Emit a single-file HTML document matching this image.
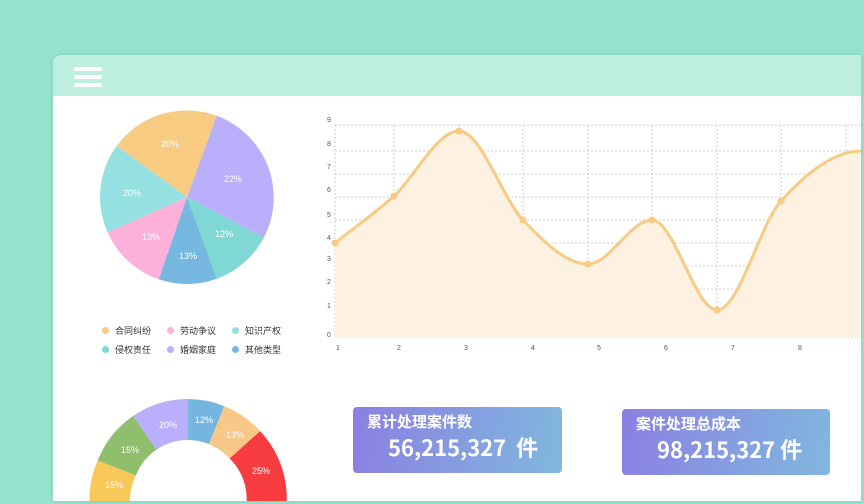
<!DOCTYPE html>
<html><head><meta charset="utf-8"><style>
body{margin:0;width:864px;height:504px;background:#95e3ce;overflow:hidden;position:relative;font-family:"Liberation Sans","Noto Sans CJK SC",sans-serif}
.card{position:absolute;left:53px;top:55px;width:808px;height:446px;background:#fff;border-radius:8px 0 0 0;overflow:hidden;box-shadow:0 0 4px rgba(0,0,0,.12)}
.hdr{position:absolute;left:0;top:0;width:100%;height:41px;background:#bdeee0}
.bar{position:absolute;left:21px;width:28px;height:4px;border-radius:2px;background:#fff}
.stat{position:absolute;height:66px;border-radius:4px;background:linear-gradient(100deg,#8b7fe2,#80b8de);color:#fff;font-family:"Noto Sans CJK SC",sans-serif;font-weight:bold}
.stat .t{position:absolute;left:14px;top:4px;font-size:15px}
.stat .n{position:absolute;left:35px;top:24px;font-size:22px}
.lg{position:absolute;font-size:9px;color:#333;font-family:"Noto Sans CJK SC",sans-serif}
.lg i{display:inline-block;width:7px;height:7px;border-radius:50%;margin-right:6px;vertical-align:-0px}
</style></head><body>
<div class="card">
<div class="hdr"><div class="bar" style="top:12px"></div><div class="bar" style="top:20px"></div><div class="bar" style="top:28px"></div></div>
</div>
<svg width="864" height="504" style="position:absolute;left:0;top:0" font-family="Liberation Sans,sans-serif">
<defs><clipPath id="c"><rect x="53" y="96" width="808" height="405"/></clipPath></defs>
<g clip-path="url(#c)">
<!-- pie -->
<g transform="translate(187,197)">
<path d="M0 0L29.7 -81.2A87 87 0 0 1 76.8 40.8Z" fill="#b9affa"/>
<path d="M0 0L76.8 40.8A87 87 0 0 1 29.8 81.7Z" fill="#80d8d4"/>
<path d="M0 0L29.8 81.7A87 87 0 0 1 -28.3 82.3Z" fill="#76b8e0"/>
<path d="M0 0L-28.3 82.3A87 87 0 0 1 -79.4 35.4Z" fill="#fdb0da"/>
<path d="M0 0L-79.4 35.4A87 87 0 0 1 -70.4 -51.1Z" fill="#95e0e0"/>
<path d="M0 0L-70.4 -51.1A87 87 0 0 1 29.7 -81.2Z" fill="#f8cb83"/>
<g fill="#fff" font-size="9" text-anchor="middle">
<text x="-17" y="-50">20%</text><text x="46" y="-15">22%</text><text x="-55" y="-1">20%</text>
<text x="-36" y="43">13%</text><text x="37" y="40">12%</text><text x="1" y="62">13%</text></g>
</g>
<!-- donut -->
<g transform="translate(188,496)">
<path d="M0 -97A97 97 0 0 1 36.3 -89.9L21 -51.9A56 56 0 0 0 0 -56Z" fill="#75b6e0"/>
<path d="M36.3 -89.9A97 97 0 0 1 72.1 -64.9L41.6 -37.5A56 56 0 0 0 21 -51.9Z" fill="#f7c887"/>
<path d="M72.1 -64.9A97 97 0 0 1 97 20L56 20A56 56 0 0 0 41.6 -37.5Z" fill="#f73d40"/>
<path d="M0 -97L0 -56A56 56 0 0 0 -31.7 -46.2L-54.9 -80A97 97 0 0 1 0 -97Z" fill="#b9affa"/>
<path d="M-54.9 -80L-31.7 -46.2A56 56 0 0 0 -52.1 -20.5L-90.3 -35.5A97 97 0 0 1 -54.9 -80Z" fill="#8fbf6c"/>
<path d="M-90.3 -35.5L-52.1 -20.5A56 56 0 0 0 -56 20L-97 20A97 97 0 0 1 -90.3 -35.5Z" fill="#f9c85a"/>
<g fill="#fff" font-size="9" text-anchor="middle">
<text x="16" y="-73">12%</text><text x="47" y="-58">13%</text><text x="73" y="-22">25%</text>
<text x="-20" y="-68">20%</text><text x="-58" y="-43">15%</text><text x="-74" y="-8">15%</text></g>
</g>
<!-- line chart grid -->
<g stroke="#ccc" stroke-width="1" stroke-dasharray="2,2" fill="none">
<path d="M335 125H864M335 151H864M335 174H864M335 197H864M335 220H864M335 243H864M335 266H864M335 289H864M335 311H864M335 337H864"/>
<path d="M335 125V337M394 125V337M459 125V337M523 125V337M588 125V337M652 125V337M717 125V337M781 125V337M846 125V337"/>
</g>
<path d="M335 243C355 227 374 214 394 196C414 178 437 131 459 131C481 131 502 198 523 220C544 242 566 264 588 264C610 264 630 220 652 220C674 220 695 310 717 310C739 310 760 224 781 201C808 171 835 151 861 151L861 337L335 337Z" fill="#fdf1e1"/>
<path d="M335 243C355 227 374 214 394 196C414 178 437 131 459 131C481 131 502 198 523 220C544 242 566 264 588 264C610 264 630 220 652 220C674 220 695 310 717 310C739 310 760 224 781 201C808 171 835 151 861 151" fill="none" stroke="#f7cb83" stroke-width="3"/>
<g fill="#f7cb83"><circle cx="335" cy="243" r="3.5"/><circle cx="394" cy="196" r="3.5"/><circle cx="459" cy="131" r="3.5"/><circle cx="523" cy="220" r="3.5"/><circle cx="588" cy="264" r="3.5"/><circle cx="652" cy="220" r="3.5"/><circle cx="717" cy="310" r="3.5"/><circle cx="781" cy="201" r="3.5"/></g>
<g fill="#555" font-size="7">
<text x="327" y="122">9</text><text x="327" y="146">8</text><text x="327" y="169">7</text><text x="327" y="192">6</text><text x="327" y="217">5</text><text x="327" y="240">4</text><text x="327" y="261">3</text><text x="327" y="284">2</text><text x="327" y="308">1</text><text x="327" y="337">0</text>
<text x="336" y="350">1</text><text x="397" y="350">2</text><text x="464" y="350">3</text><text x="531" y="350">4</text><text x="597" y="350">5</text><text x="664" y="350">6</text><text x="731" y="350">7</text><text x="798" y="350">8</text>
</g>
</g>
</svg>
<div class="lg" style="left:102px;top:324px"><i style="background:#f8cb83"></i>合同纠纷</div>
<div class="lg" style="left:167px;top:324px"><i style="background:#fdb0da"></i>劳动争议</div>
<div class="lg" style="left:232px;top:324px"><i style="background:#95e0e0"></i>知识产权</div>
<div class="lg" style="left:102px;top:343px"><i style="background:#80d8d4"></i>侵权责任</div>
<div class="lg" style="left:167px;top:343px"><i style="background:#b9affa"></i>婚姻家庭</div>
<div class="lg" style="left:232px;top:343px"><i style="background:#76b8e0"></i>其他类型</div>
<div class="stat" style="left:353px;top:407px;width:209px"><div class="t">累计处理案件数</div><div class="n">56,215,327&nbsp; 件</div></div>
<div class="stat" style="left:622px;top:409px;width:208px"><div class="t">案件处理总成本</div><div class="n">98,215,327 件</div></div>
</body></html>
